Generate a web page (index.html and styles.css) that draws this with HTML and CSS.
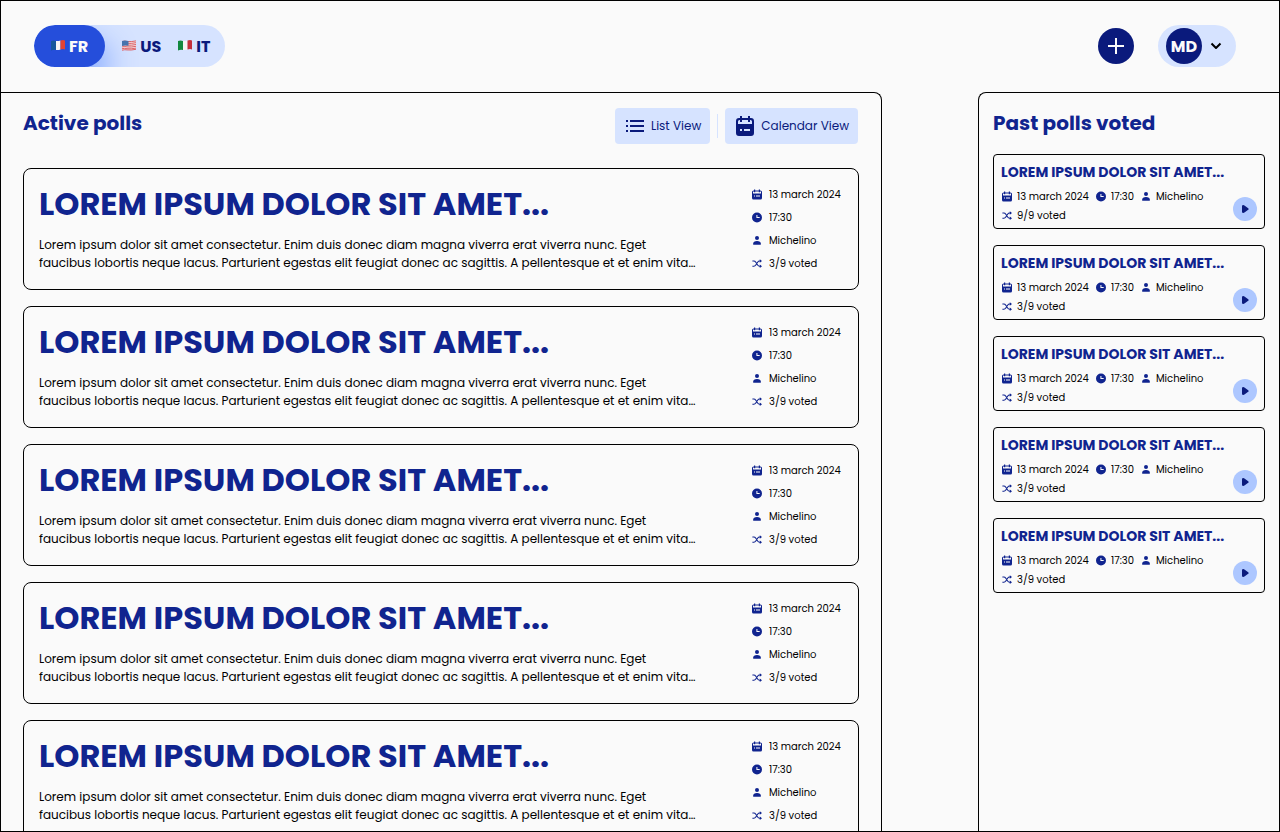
FILE: index.html
```html
<!DOCTYPE html>
<html lang="en">
<head>
<meta charset="utf-8">
<meta name="viewport" content="width=device-width, initial-scale=1">
<title>Polls</title>
<link rel="stylesheet" href="styles.css">
</head>
<body>
<svg class="sprite" aria-hidden="true">
  <symbol id="calendar" viewBox="0 0 10 11"><path fill="currentColor" fill-rule="evenodd" d="M2 .5h1.200v1h3.600v-1H8v1h.5Q10 1.500 10 3v6q0 1.500-1.500 1.500h-7Q0 10.500 0 9V3q0-1.500 1.500-1.500H2zM1 3v1.500h8V3q0-.5-.5-.5H8v.8H6.800v-.8H3.200v.8H2v-.8h-.5Q1 2.500 1 3zM2 6.500v1h1v-1zM4 6.500v1h4v-1z"/></symbol>
  <symbol id="clock" viewBox="0 0 12 12"><path fill="currentColor" fill-rule="evenodd" d="M6 0a6 6 0 1 1 0 12A6 6 0 0 1 6 0zM5.300 3v3.700h3.900V5.500H6.500V3z"/></symbol>
  <symbol id="person" viewBox="0 0 10 11"><circle cx="5" cy="3" r="2" fill="currentColor"/><path fill="currentColor" d="M1.200 9.800V8.500C1.200 7 2.500 5.900 5 5.900S8.800 7 8.800 8.500v1.300z"/></symbol>
  <symbol id="shuffle" viewBox="0 0 10 11"><path fill="none" stroke="currentColor" stroke-width="1.100" d="M.4 3h1.400q1.200 0 2 1.200L5.600 7q.8 1.200 2 1.200h1M.4 8.200h1.400q1.200 0 2-1.200l1.800-2.800Q6.400 3 7.600 3h1"/><path fill="currentColor" d="M7.800 1.200 10 3 7.800 4.800zM7.800 6.400 10 8.200 7.800 10z"/></symbol>
</svg>
<div class="app">
  <header class="topbar">
    <nav class="languages" aria-label="Language">
      <button class="language language-active" type="button" aria-pressed="true">
        <svg class="flag" viewBox="0 0 14 11" aria-hidden="true"><path fill="#15579b" d="M0 1q2.500-.8 5 0v9q-2.500-.8-5 .5z"/><path fill="#f4f4f4" d="M5 1q2 .4 4.500-.5v9Q7 10.400 5 10z"/><path fill="#e24335" d="M9.500.5Q12-.3 14 .4v9q-2-.6-4.500.1z"/></svg>FR</button>
      <button class="language" type="button" aria-pressed="false">
        <svg class="flag" viewBox="0 0 14 11" aria-hidden="true"><path fill="#f3e4e4" d="M0 1q3-.8 5 0 4 .5 9-.6v9Q9 10.600 5 10q-2-.6-5 .5z"/><path fill="none" stroke="#d8545a" stroke-width=".9" d="M0 1.500q3-.8 5 0 4 .5 9-.6M0 3.300q3-.8 5 0 4 .5 9-.6M0 5.100q3-.8 5 0 4 .5 9-.6M0 6.900q3-.8 5 0 4 .5 9-.6M0 8.700q3-.8 5 0 4 .5 9-.6M0 10.200q3-.8 5-.3 4 .5 9-.6"/><path fill="#4674ae" d="M0 1q3-.8 6.500.1v4.700Q3 5 0 6z"/></svg>US</button>
      <button class="language" type="button" aria-pressed="false">
        <svg class="flag" viewBox="0 0 14 11" aria-hidden="true"><path fill="#12883f" d="M0 1q2.500-.8 5 0v9q-2.500-.8-5 .5z"/><path fill="#f4f4f4" d="M5 1q2 .4 4.500-.5v9Q7 10.400 5 10z"/><path fill="#c4303b" d="M9.500.5Q12-.3 14 .4v9q-2-.6-4.500.1z"/></svg>IT</button>
    </nav>
    <div class="account">
      <button class="add" type="button" aria-label="New poll"><svg viewBox="0 0 16 16" width="16" height="16" aria-hidden="true"><path stroke="currentColor" stroke-width="2" d="M8 0v16M0 8h16"/></svg></button>
      <button class="profile" type="button" aria-label="MD account menu"><span class="avatar">MD</span><svg viewBox="0 0 12 8" width="12" height="8" aria-hidden="true"><path fill="none" stroke="#000" stroke-width="2" stroke-linejoin="round" d="M1.500 1.500 6 6l4.500-4.500"/></svg></button>
    </div>
  </header>
  <div class="columns">
    <main class="panel active-panel">
      <div class="panel-head">
        <h1 class="panel-title">Active polls</h1>
        <div class="views">
          <button class="view" type="button"><svg viewBox="0 0 18 12" width="18" height="12" aria-hidden="true"><path stroke="currentColor" stroke-width="2" d="M0 1h2M4 1h14M0 6h2M4 6h14M0 11h2M4 11h14"/></svg>List View</button>
          <span class="divider"></span>
          <button class="view" type="button"><svg viewBox="0 0 18 20" width="18" height="20" aria-hidden="true"><path fill="currentColor" fill-rule="evenodd" d="M4 0h2v2h6V0h2v2h1q3 0 3 3v12q0 3-3 3H3q-3 0-3-3V5q0-3 3-3h1zM2 5.500V8h14V5.500Q16 4 14.500 4H14v2h-2V4H6v2H4V4h-.5Q2 4 2 5.500zM4 13v2h2v-2zM8 13v2h6v-2z"/></svg>Calendar View</button>
        </div>
      </div>
      <div class="polls" id="polls"></div>
    </main>
    <aside class="panel past-panel">
      <h2 class="panel-title">Past polls voted</h2>
      <div class="past-list" id="past"></div>
    </aside>
  </div>
</div>
<script src="polls.js"></script>
</body>
</html>
```
FILE: styles.css
```css
* { box-sizing: border-box; }

body {
  margin: 0;
  background: #fafafa;
  color: #000;
  font-family: Poppins, Inter, "Open Sans", sans-serif;
}

h1, h2, h3, p, ul { margin: 0; padding: 0; }
ul { list-style: none; }
button { border: 0; padding: 0; font: inherit; cursor: pointer; }
svg { display: block; flex: none; }
.sprite { position: absolute; width: 0; height: 0; }

.app {
  display: flex;
  flex-direction: column;
  height: 100vh;
  border: 1px solid #000;
  overflow: hidden;
}

.topbar {
  display: flex;
  justify-content: space-between;
  align-items: center;
  flex: none;
  padding: 24px 43px 25px 33px;
}

.languages {
  display: flex;
  height: 42px;
  padding-right: 6px;
  border-radius: 21px;
  background: #d6e3ff;
  overflow: hidden;
}

.language {
  display: flex;
  align-items: center;
  gap: 4px;
  padding: 0 8px 0 9px;
  background: none;
  color: #0a1a7c;
  font-size: 16px;
  font-weight: 700;
}

.language-active {
  margin-right: 8px;
  padding: 0 17px;
  border-radius: 21px;
  background: #254edb;
  color: #fafafa;
  box-shadow: 4px 16px 30px #84a8ff;
}

.flag { width: 14px; height: 11px; margin-bottom: 2px; }

.account { display: flex; align-items: center; gap: 24px; }

.add, .avatar {
  display: flex;
  align-items: center;
  justify-content: center;
  width: 36px;
  height: 36px;
  border-radius: 50%;
  background: #0a1a7c;
  color: #fafafa;
}

.avatar { font-size: 16px; font-weight: 700; }

.profile {
  display: flex;
  align-items: center;
  gap: 8px;
  height: 42px;
  padding: 0 14px 0 8px;
  border-radius: 21px;
  background: #d6e3ff;
}

.columns {
  display: flex;
  flex: 1;
  gap: 96px;
  min-height: 0;
}

.panel { border: 0 solid #000; border-top-width: 1px; overflow: hidden; }

.active-panel {
  flex: 1;
  min-width: 0;
  padding: 15px 22px 0;
  border-right-width: 1px;
  border-top-right-radius: 8px;
}

.past-panel {
  flex: none;
  width: 301px;
  padding: 15px 14px 0;
  border-left-width: 1px;
  border-top-left-radius: 8px;
}

.panel-title {
  color: #10248f;
  font-size: 20px;
  line-height: 30px;
  font-weight: 700;
}

.panel-head { display: flex; justify-content: space-between; }

.views { display: flex; align-items: center; gap: 7px; padding-right: 1px; }

.view {
  display: flex;
  align-items: center;
  gap: 7px;
  height: 36px;
  padding: 0 9px 0 11px;
  border-radius: 4px;
  background: #d6e3ff;
  color: #0a1a7c;
  font-size: 12px;
}

.divider { width: 1px; height: 24px; background: #d6e3ff; }

.polls { display: grid; gap: 16px; margin-top: 24px; }

.poll {
  display: flex;
  justify-content: space-between;
  align-items: center;
  height: 122px;
  padding: 0 15px;
  border: 1px solid #000;
  border-radius: 8px;
}

.poll-title {
  color: #10248f;
  font-size: 32px;
  line-height: 40px;
  font-weight: 700;
  white-space: nowrap;
}

.poll-text {
  margin: 12px 0 2px;
  font-size: 12px;
  line-height: 18px;
  white-space: nowrap;
}

.meta { font-size: 10px; line-height: 15px; }
.meta li { display: flex; align-items: center; gap: 7px; white-space: nowrap; }
.meta svg { width: 10px; height: 11px; color: #10248f; }

.poll .meta { display: grid; gap: 8px; flex: none; width: 91px; }

.past-list { display: grid; gap: 16px; margin-top: 16px; }

.past {
  display: flex;
  justify-content: space-between;
  align-items: flex-end;
  padding: 7px 7px 5px;
  border: 1px solid #000;
  border-radius: 4px;
}

.past-title {
  margin-bottom: 7px;
  color: #10248f;
  font-size: 14px;
  line-height: 20px;
  font-weight: 700;
  white-space: nowrap;
}

.past .meta {
  display: grid;
  grid-template-columns: 94px 45px auto;
  row-gap: 4px;
  padding-left: 1px;
}

.past .meta li { gap: 5px; }

.play {
  display: flex;
  align-items: center;
  justify-content: center;
  flex: none;
  width: 24px;
  height: 24px;
  margin-bottom: 2px;
  border-radius: 50%;
  background: #adc7ff;
  color: #0a1a7c;
}
```
FILE: polls.js
```js
const icon = name => `<svg aria-hidden="true"><use href="#${name}"/></svg>`;

const meta = votes => `
  <ul class="meta">
    <li>${icon("calendar")}13 march 2024</li>
    <li>${icon("clock")}17:30</li>
    <li>${icon("person")}Michelino</li>
    <li>${icon("shuffle")}${votes}/9 voted</li>
  </ul>`;

const title = "LOREM IPSUM DOLOR SIT AMET...";

document.getElementById("polls").innerHTML = [3, 3, 3, 3, 3].map(votes => `
  <article class="poll">
    <div>
      <h2 class="poll-title">${title}</h2>
      <p class="poll-text">Lorem ipsum dolor sit amet consectetur. Enim duis donec diam magna viverra erat viverra nunc. Eget<br>faucibus lobortis neque lacus. Parturient egestas elit feugiat donec ac sagittis. A pellentesque et et enim vita…</p>
    </div>
    ${meta(votes)}
  </article>`).join("");

document.getElementById("past").innerHTML = [9, 3, 3, 3, 3].map(votes => `
  <article class="past">
    <div>
      <h3 class="past-title">${title}</h3>
      ${meta(votes)}
    </div>
    <button class="play" type="button" aria-label="Open results"><svg viewBox="0 0 7 8" width="7" height="8" aria-hidden="true"><path fill="currentColor" d="M0 1.200q0-1.200 1.200-1.200.8 0 1.600.8l3.400 2.400q1 .8 0 1.600L2.800 7.200Q2 8 1.200 8 0 8 0 6.800z"/></svg></button>
  </article>`).join("");
```
